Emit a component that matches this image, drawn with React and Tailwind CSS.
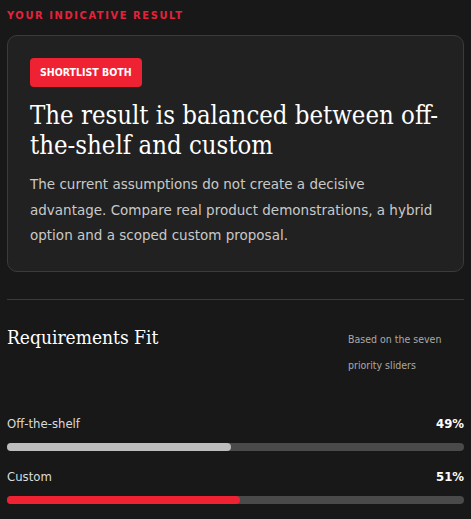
import React from "react";

const bars = [
  { label: "Off-the-shelf", value: 49, fill: "bg-[#bdbdbd]" },
  { label: "Custom", value: 51, fill: "bg-[#ee2233]" },
];

const slab = { fontFamily: '"DejaVu Serif Condensed", "DejaVu Serif", serif' };
const sans = { fontFamily: '"DejaVu Sans", "Noto Sans", sans-serif' };
const narrow = { fontFamily: '"DejaVu Sans Condensed", "Roboto", sans-serif' };

const FitBar = ({ label, value, fill }) => (
  <div>
    <div className="flex items-end justify-between text-[13px] leading-[16px]" style={narrow}>
      <span className="text-[#dcdcdc]">{label}</span>
      <span className="font-bold text-white">{value}%</span>
    </div>
    <div className="mt-[11px] h-2 w-full rounded-full bg-[#4a4a4a]">
      <div className={`h-2 rounded-full ${fill}`} style={{ width: `${value}%` }} />
    </div>
  </div>
);

export default function App() {
  return (
    <div className="min-h-[519px] w-full bg-[#181818] px-[7px] pt-[8px] text-white">
      <p
        className="text-[11px] font-semibold leading-[16px] tracking-[1.6px] uppercase text-[#e8213a]"
        style={narrow}
      >
        Your indicative result
      </p>

      <div className="mt-[11px] rounded-[10px] border border-[#3b3b3b] bg-[#212121] p-[22px]">
        <span
          className="inline-block rounded-[4px] bg-[#ee2233] px-[10px] py-[7px] text-[10.5px] font-bold leading-[15px] uppercase text-white"
          style={narrow}
        >
          Shortlist both
        </span>
        <h2 className="mt-[13px] text-[25.5px] leading-[30px] text-white" style={slab}>
          The result is balanced between off-the-shelf and custom
        </h2>
        <p
          className="mt-[12px] max-w-[404px] text-[13.5px] leading-[25.5px] text-[#c9c9c9]"
          style={sans}
        >
          The current assumptions do not create a decisive advantage. Compare real
          product demonstrations, a hybrid option and a scoped custom proposal.
        </p>
      </div>

      <div className="mt-[27px] h-px w-full bg-[#3a3a3a]" />

      <div className="mt-[24px] flex justify-between">
        <h3 className="text-[19px] leading-[26px] text-white" style={slab}>
          Requirements Fit
        </h3>
        <p
          className="w-[116px] pt-[2px] text-[10.5px] leading-[26px] text-[#a9a9a9]"
          style={narrow}
        >
          Based on the seven priority sliders
        </p>
      </div>

      <div className="mt-[38px] flex flex-col gap-[18px]">
        {bars.map((b) => (
          <FitBar key={b.label} {...b} />
        ))}
      </div>
    </div>
  );
}
